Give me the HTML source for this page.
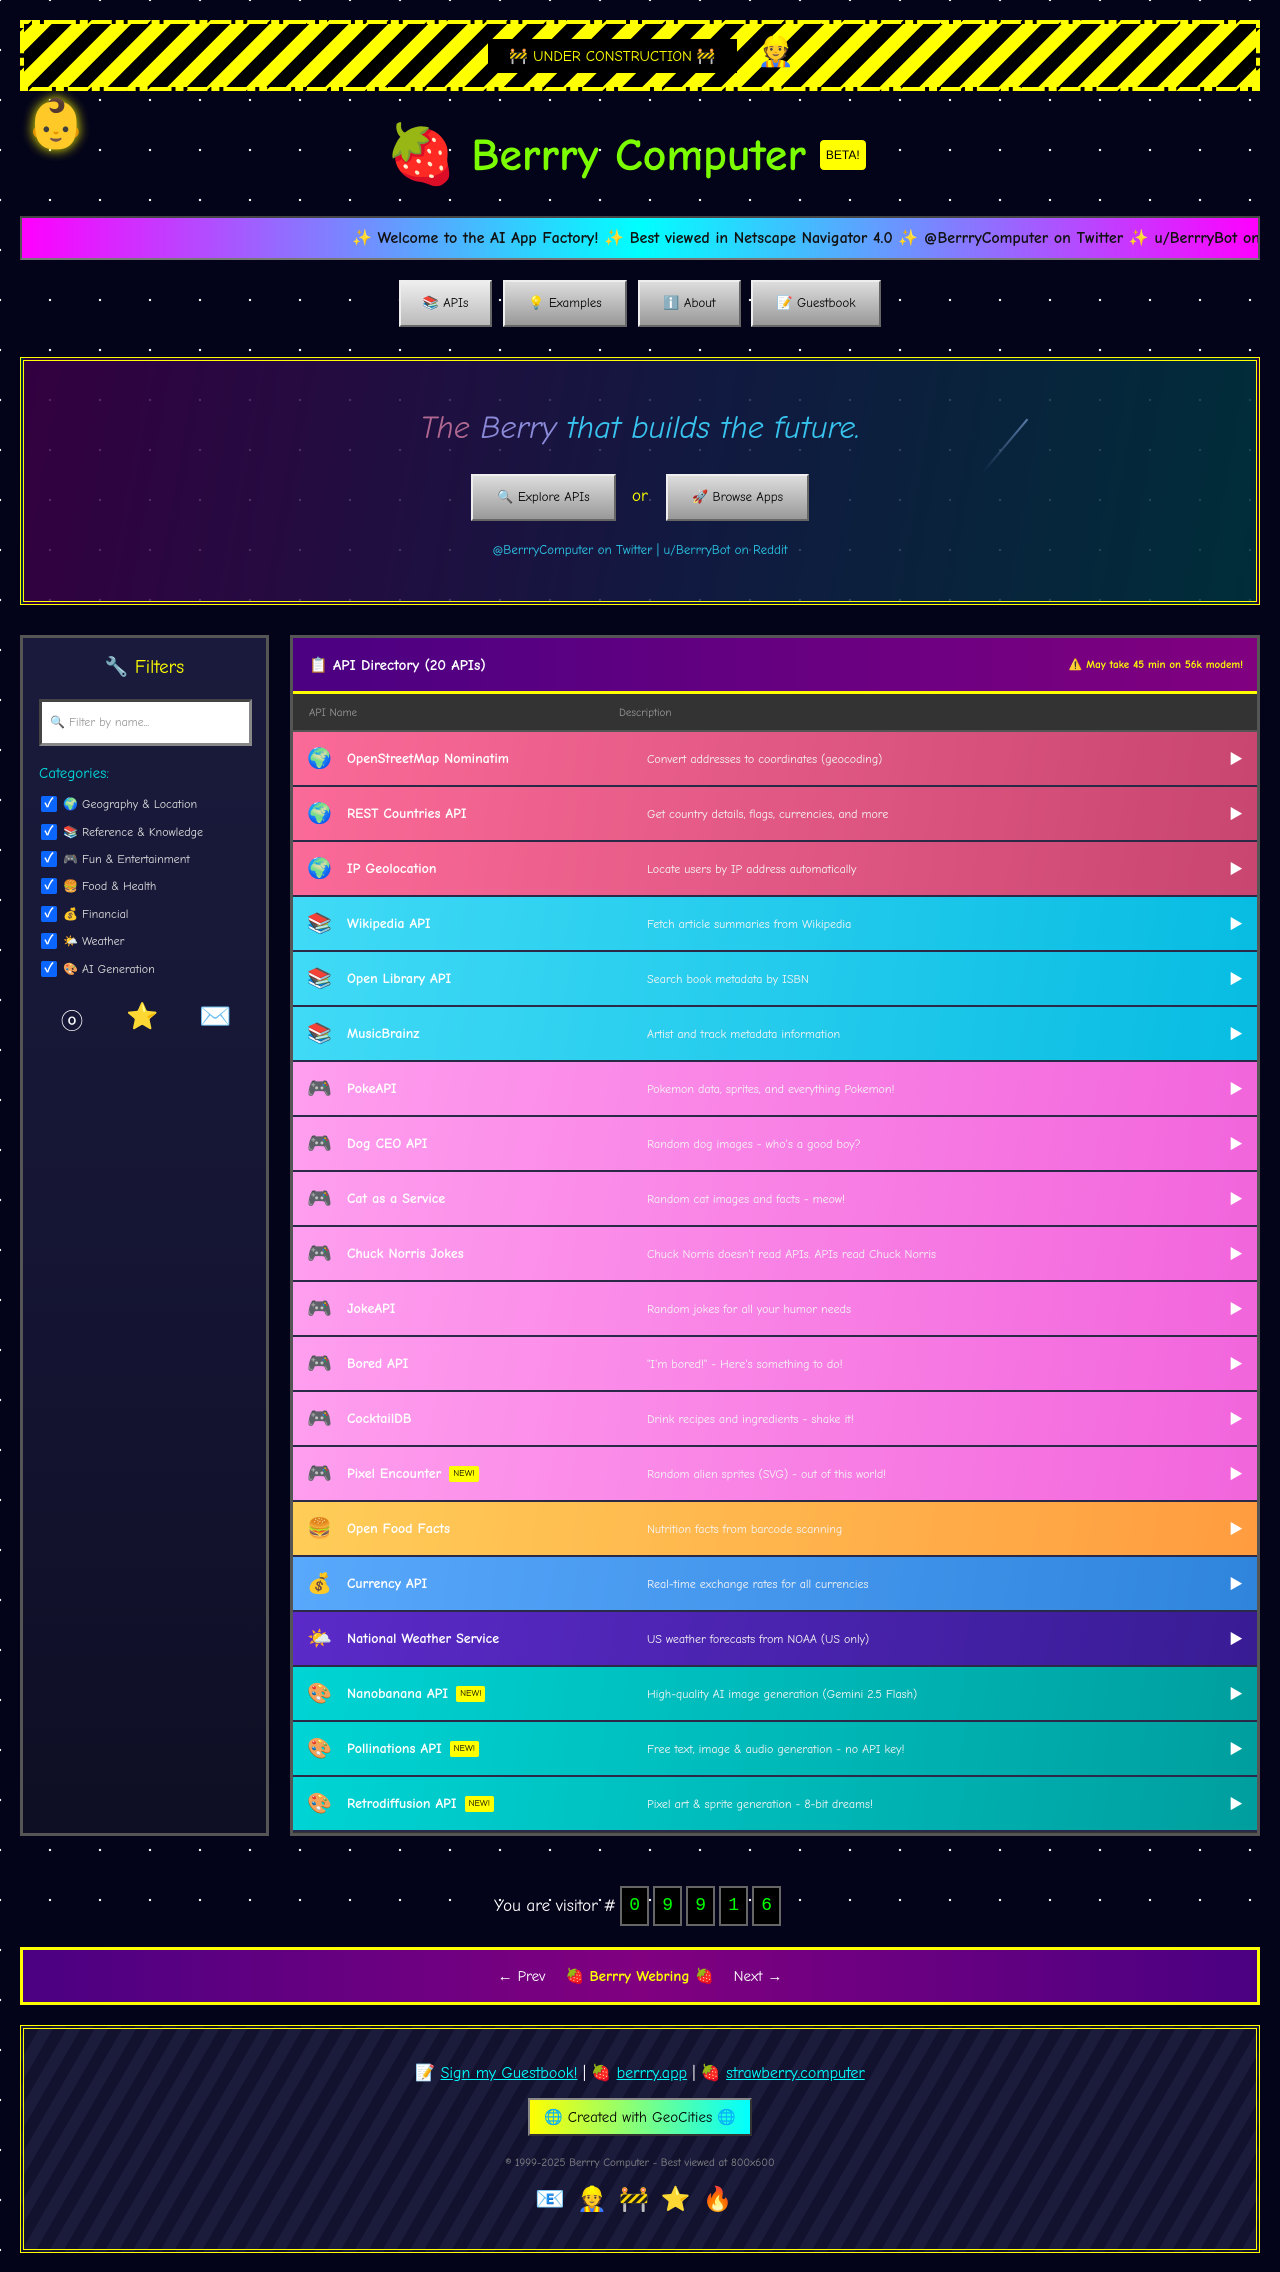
<!DOCTYPE html>
<html><head><meta charset="utf-8">
<style>
*{box-sizing:border-box;margin:0;padding:0}
body{width:1280px;height:2272px;overflow:hidden;background:#03031a;font-family:"Comic Sans MS","Comic Neue","Liberation Sans","Noto Sans CJK JP",sans-serif;color:#fff;position:relative;
background-image:radial-gradient(circle,#fff 1px,transparent 1.4px);background-size:50px 50px;background-position:25px 25px}
.abs{position:absolute}
.construct{left:20px;top:20px;width:1240px;height:71px;border:4px dashed #ff0;background:repeating-linear-gradient(-45deg,#ff0 0 14px,#000 14px 28px)}
.uc{left:488px;top:39px;width:249px;height:34px;background:#000;color:#ff0;font-size:15px;display:flex;align-items:center;justify-content:center}
.title{left:385px;top:120px;height:70px;display:flex;align-items:center;gap:14px}
.title h1{font-size:46px;font-weight:bold;color:#7cfc00;font-family:"Comic Sans MS","Comic Neue","Liberation Sans",sans-serif}
.beta{background:#ff0;color:#000;font-size:12px;padding:8px 6px;border-radius:4px;font-family:"Liberation Sans",sans-serif}
.marquee{left:20px;top:216px;width:1240px;height:44px;border:2px solid #555;border-top-color:#444;border-bottom-color:#777;background:linear-gradient(90deg,#f0f 0%,#0ff 50%,#f0f 100%);color:#111;font-size:16px;font-weight:bold;white-space:nowrap;overflow:hidden;padding-left:330px;line-height:40px}
.btn{position:absolute;background:linear-gradient(#ddd,#999);border:2px solid;border-color:#eee #666 #666 #eee;color:#000;font-size:13px;display:flex;align-items:center;justify-content:center}
.hero{left:20px;top:357px;width:1240px;height:248px;border:4px double #ff0;background:linear-gradient(100deg,rgba(60,0,70,.85),rgba(20,30,70,.85) 55%,rgba(0,50,60,.9));}
.tag{left:0;width:100%;top:48px;text-align:center;font-size:32px;font-style:italic}
.side{left:20px;top:635px;width:249px;height:1201px;border:3px solid #555;background:linear-gradient(#1a1a3c,#141432 60%,#0e0e24)}
.cat{position:absolute;left:18px;font-size:12px;color:#ddd;display:flex;align-items:center;gap:6px}
.cb{width:16px;height:16px;background:#0a66ff;border-radius:2px;color:#fff;font-size:13px;line-height:16px;text-align:center;font-weight:bold}
.table{left:290px;top:635px;width:970px;height:1201px;border:3px solid #555;background:#333}
.thead{height:56px;background:linear-gradient(90deg,#4b0082,#800080);border-bottom:3px solid #ff0;display:flex;align-items:center;justify-content:space-between;padding:0 14px 0 16px}
.colh{height:38px;background:#333;border-bottom:2px solid #555;font-size:11px;color:#999;position:relative}
.row{height:55px;border-bottom:2px solid #2a2a48;position:relative;font-size:14px}
.row .ic{position:absolute;left:14px;top:14px;font-size:20px}
.row .nm{position:absolute;left:54px;top:18px;font-weight:bold;font-size:14px;display:flex;align-items:center;gap:8px}
.row .ds{position:absolute;left:354px;top:20px;font-size:12px;color:#f4f4f4}
.row .ar{position:absolute;right:14px;top:17px;font-size:14px}
.new{background:#ff0;color:#000;font-size:9px;padding:3px 4px;border-radius:2px;font-weight:normal}
.g{background:linear-gradient(100deg,#fb6a98,#c84670)}
.r{background:linear-gradient(100deg,#40daf6,#08bce2)}
.f{background:linear-gradient(100deg,#ff9eee,#f265dc)}
.fo{background:linear-gradient(100deg,#ffcd58,#ff9c40)}
.cu{background:linear-gradient(100deg,#58a8fc,#2f84dc)}
.w{background:linear-gradient(100deg,#5b2ac8,#381c94)}
.ai{background:linear-gradient(100deg,#00d4d4,#009e9e)}
.digit{display:inline-block;width:29px;height:40px;background:#000;border:2px solid #666;color:#0f0;font-family:"Liberation Mono",monospace;font-size:18px;text-align:center;line-height:36px;margin-left:4px}
.webring{left:20px;top:1947px;width:1240px;height:58px;border:3px solid #ff0;background:linear-gradient(90deg,#4b0082,#800080 50%,#4b0082);display:flex;align-items:center;justify-content:center;gap:20px;font-size:15px}
.footer{left:20px;top:2025px;width:1240px;height:228px;border:4px double #ff0;background:repeating-linear-gradient(-60deg,#1b1b3c 0 12px,#12122e 12px 24px);text-align:center}
a{color:#0ff;text-decoration:underline}
</style></head><body>

<div class="abs construct"></div>
<div class="abs uc">🚧 UNDER CONSTRUCTION 🚧</div>
<div class="abs" style="left:757px;top:34px;font-size:30px">👷</div>
<div class="abs" style="left:26px;top:95px;font-size:48px;filter:drop-shadow(0 0 6px #ff0)">👶</div>

<div class="abs title"><span style="font-size:58px">🍓</span><h1>Berrry Computer</h1><span class="beta">BETA!</span></div>

<div class="abs marquee">✨ Welcome to the AI App Factory! ✨ Best viewed in Netscape Navigator 4.0 ✨ @BerrryComputer on Twitter ✨ u/BerrryBot on Reddit</div>

<div class="btn" style="left:399px;top:280px;width:93px;height:47px;background:linear-gradient(#eee,#bbb)">📚 APIs</div>
<div class="btn" style="left:503px;top:280px;width:124px;height:47px">💡 Examples</div>
<div class="btn" style="left:638px;top:280px;width:103px;height:47px">ℹ️ About</div>
<div class="btn" style="left:751px;top:280px;width:130px;height:47px">📝 Guestbook</div>

<div class="abs hero">
 <div class="abs tag"><span style="color:#b06890">The </span><span style="color:#8a8ad8">Berry </span><span style="color:#38c4ee">that builds the future.</span></div>
 <div class="btn" style="left:447px;top:113px;width:145px;height:47px">🔍 Explore APIs</div>
 <div class="abs" style="left:608px;top:126px;color:#ff0;font-size:17px">or</div>
 <div class="btn" style="left:642px;top:113px;width:143px;height:47px">🚀 Browse Apps</div>
 <div class="abs" style="left:0;width:100%;top:182px;text-align:center;color:#2cc8e8;font-size:13px">@BerrryComputer on Twitter | u/BerrryBot on Reddit</div>
 <div class="abs" style="left:980px;top:50px;width:2px;height:70px;background:linear-gradient(#5a7aa8,transparent);transform:rotate(40deg)"></div>
</div>

<div class="abs side">
 <div class="abs" style="left:0;width:100%;top:17px;text-align:center;color:#ff0;font-size:19px">🔧 Filters</div>
 <div class="abs" style="left:16px;top:61px;width:213px;height:47px;background:#fff;border:3px solid;border-color:#444 #888 #888 #444;color:#999;font-size:12px;padding:13px 8px">🔍 Filter by name...</div>
 <div class="abs" style="left:16px;top:126px;color:#0dd;font-size:15px">Categories:</div>
 <div class="cat" style="top:158px"><span class="cb">✓</span>🌍 Geography &amp; Location</div>
 <div class="cat" style="top:186px"><span class="cb">✓</span>📚 Reference &amp; Knowledge</div>
 <div class="cat" style="top:213px"><span class="cb">✓</span>🎮 Fun &amp; Entertainment</div>
 <div class="cat" style="top:240px"><span class="cb">✓</span>🍔 Food &amp; Health</div>
 <div class="cat" style="top:268px"><span class="cb">✓</span>💰 Financial</div>
 <div class="cat" style="top:295px"><span class="cb">✓</span>🌤️ Weather</div>
 <div class="cat" style="top:323px"><span class="cb">✓</span>🎨 AI Generation</div>
 <div class="abs" style="left:38px;top:366px;font-size:22px;color:#fff">ⓞ</div>
 <div class="abs" style="left:103px;top:364px;font-size:26px">⭐</div>
 <div class="abs" style="left:176px;top:364px;font-size:26px">✉️</div>
</div>

<div class="abs table">
 <div class="thead"><span style="font-size:15px;font-weight:bold">📋 API Directory (20 APIs)</span><span style="color:#ff0;font-size:11px;font-weight:bold">⚠️ May take 45 min on 56k modem!</span></div>
 <div class="colh"><span class="abs" style="left:16px;top:12px">API Name</span><span class="abs" style="left:326px;top:12px">Description</span></div>
 <div class="row g"><span class="ic">🌍</span><span class="nm">OpenStreetMap Nominatim</span><span class="ds">Convert addresses to coordinates (geocoding)</span><span class="ar">▶</span></div>
 <div class="row g"><span class="ic">🌍</span><span class="nm">REST Countries API</span><span class="ds">Get country details, flags, currencies, and more</span><span class="ar">▶</span></div>
 <div class="row g"><span class="ic">🌍</span><span class="nm">IP Geolocation</span><span class="ds">Locate users by IP address automatically</span><span class="ar">▶</span></div>
 <div class="row r"><span class="ic">📚</span><span class="nm">Wikipedia API</span><span class="ds">Fetch article summaries from Wikipedia</span><span class="ar">▶</span></div>
 <div class="row r"><span class="ic">📚</span><span class="nm">Open Library API</span><span class="ds">Search book metadata by ISBN</span><span class="ar">▶</span></div>
 <div class="row r"><span class="ic">📚</span><span class="nm">MusicBrainz</span><span class="ds">Artist and track metadata information</span><span class="ar">▶</span></div>
 <div class="row f"><span class="ic">🎮</span><span class="nm">PokeAPI</span><span class="ds">Pokemon data, sprites, and everything Pokemon!</span><span class="ar">▶</span></div>
 <div class="row f"><span class="ic">🎮</span><span class="nm">Dog CEO API</span><span class="ds">Random dog images - who's a good boy?</span><span class="ar">▶</span></div>
 <div class="row f"><span class="ic">🎮</span><span class="nm">Cat as a Service</span><span class="ds">Random cat images and facts - meow!</span><span class="ar">▶</span></div>
 <div class="row f"><span class="ic">🎮</span><span class="nm">Chuck Norris Jokes</span><span class="ds">Chuck Norris doesn't read APIs. APIs read Chuck Norris</span><span class="ar">▶</span></div>
 <div class="row f"><span class="ic">🎮</span><span class="nm">JokeAPI</span><span class="ds">Random jokes for all your humor needs</span><span class="ar">▶</span></div>
 <div class="row f"><span class="ic">🎮</span><span class="nm">Bored API</span><span class="ds">"I'm bored!" - Here's something to do!</span><span class="ar">▶</span></div>
 <div class="row f"><span class="ic">🎮</span><span class="nm">CocktailDB</span><span class="ds">Drink recipes and ingredients - shake it!</span><span class="ar">▶</span></div>
 <div class="row f"><span class="ic">🎮</span><span class="nm">Pixel Encounter <span class="new">NEW!</span></span><span class="ds">Random alien sprites (SVG) - out of this world!</span><span class="ar">▶</span></div>
 <div class="row fo"><span class="ic">🍔</span><span class="nm">Open Food Facts</span><span class="ds">Nutrition facts from barcode scanning</span><span class="ar">▶</span></div>
 <div class="row cu"><span class="ic">💰</span><span class="nm">Currency API</span><span class="ds">Real-time exchange rates for all currencies</span><span class="ar">▶</span></div>
 <div class="row w"><span class="ic">🌤️</span><span class="nm">National Weather Service</span><span class="ds">US weather forecasts from NOAA (US only)</span><span class="ar">▶</span></div>
 <div class="row ai"><span class="ic">🎨</span><span class="nm">Nanobanana API <span class="new">NEW!</span></span><span class="ds">High-quality AI image generation (Gemini 2.5 Flash)</span><span class="ar">▶</span></div>
 <div class="row ai"><span class="ic">🎨</span><span class="nm">Pollinations API <span class="new">NEW!</span></span><span class="ds">Free text, image &amp; audio generation - no API key!</span><span class="ar">▶</span></div>
 <div class="row ai"><span class="ic">🎨</span><span class="nm">Retrodiffusion API <span class="new">NEW!</span></span><span class="ds">Pixel art &amp; sprite generation - 8-bit dreams!</span><span class="ar">▶</span></div>
</div>

<div class="abs" style="left:494px;top:1886px;display:flex;align-items:center;font-size:17px">You are visitor #<span class="digit">0</span><span class="digit">9</span><span class="digit">9</span><span class="digit">1</span><span class="digit">6</span></div>

<div class="abs webring"><span>← Prev</span><span style="color:#ff0;font-weight:bold">🍓 Berrry Webring 🍓</span><span>Next →</span></div>

<div class="abs footer">
 <div style="margin-top:34px;font-size:16px">📝 <a>Sign my Guestbook!</a> | 🍓 <a>berrry.app</a> | 🍓 <a>strawberry.computer</a></div>
 <div style="display:inline-block;margin-top:16px;padding:8px 14px;background:linear-gradient(90deg,#ff0,#0ff);color:#000;font-size:15px;border:2px solid;border-color:#888 #333 #333 #888">🌐 Created with GeoCities 🌐</div>
 <div style="margin-top:20px;color:#888;font-size:11px">© 1999-2025 Berrry Computer - Best viewed at 800x600</div>
 <div style="margin-top:16px;font-size:24px;letter-spacing:12px">📧👷🚧⭐🔥</div>
</div>
</body></html>
